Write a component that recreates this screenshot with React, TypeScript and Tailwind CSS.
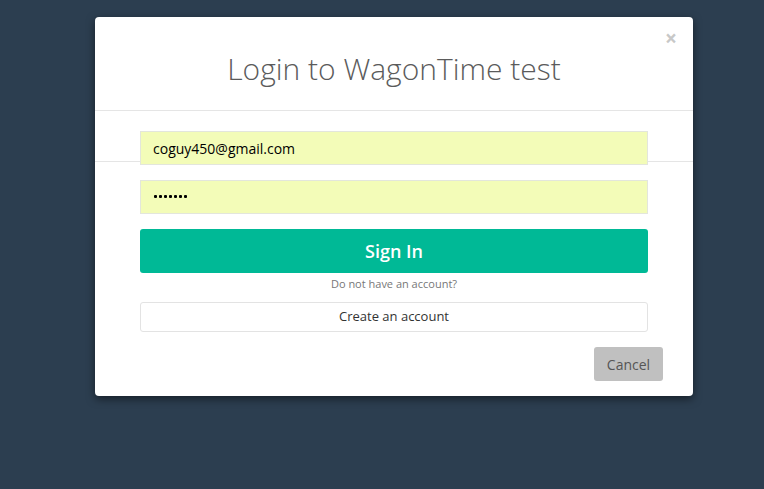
import React from "react";

export default function App() {
  const dots = [0, 1, 2, 3, 4, 5, 6];
  return (
    <div
      className="w-[764px] h-[489px] bg-[#2c3e50] pt-[17px] pl-[95px] overflow-hidden"
      style={{ fontFamily: '"Open Sans", "Liberation Sans", sans-serif' }}
    >
      <div className="w-[598px] bg-white rounded-[4px] shadow-[0_3px_9px_rgba(0,0,0,0.5)]">
        <div className="relative h-[94px] border-b border-[#e5e5e5] flex items-center justify-center">
          <h1 className="text-[30px] font-light text-[#5b5b5b] leading-none pb-[2px] pt-[12px]">
            Login to WagonTime test
          </h1>
          <span className="absolute right-[16px] top-[11px] text-[21px] font-bold leading-none text-[#c8c8c8]">
            ×
          </span>
        </div>
        <div className="relative px-[45px] pt-[20px] pb-[15px]">
          <div className="absolute left-0 right-0 top-[50px] h-px bg-[#e5e5e5]" />
          <div className="relative flex flex-col">
            <div className="h-[34px] bg-[#f3fcb8] border border-[#e3e6dc] flex items-center pl-[12px] text-[14px] text-black">
              coguy450@gmail.com
            </div>
            <div
              className="mt-[15px] h-[34px] bg-[#f3fcb8] border border-[#e3e6dc] flex items-center pl-[13px] pb-[2px] gap-[2px]"
              aria-label="password"
            >
              {dots.map((d) => (
                <span key={d} className="block w-[3px] h-[3px] rounded-[1px] bg-black" />
              ))}
            </div>
            <div className="mt-[15px] h-[44px] bg-[#00b996] rounded-[3px] flex items-center justify-center text-white text-[18px] font-semibold">
              Sign In
            </div>
            <div className="mt-[3px] text-center text-[11px] text-[#777] leading-[16px]">
              Do not have an account?
            </div>
            <div className="mt-[10px] h-[30px] border border-[#e3e3e3] rounded-[3px] flex items-center justify-center text-[13px] text-[#333]">
              Create an account
            </div>
          </div>
          <div className="flex justify-end mt-[15px] mr-[-15px]">
            <div className="w-[69px] h-[34px] bg-[#c0c0c0] rounded-[3px] flex items-center justify-center text-[14px] text-[#555]">
              Cancel
            </div>
          </div>
        </div>
      </div>
    </div>
  );
}
